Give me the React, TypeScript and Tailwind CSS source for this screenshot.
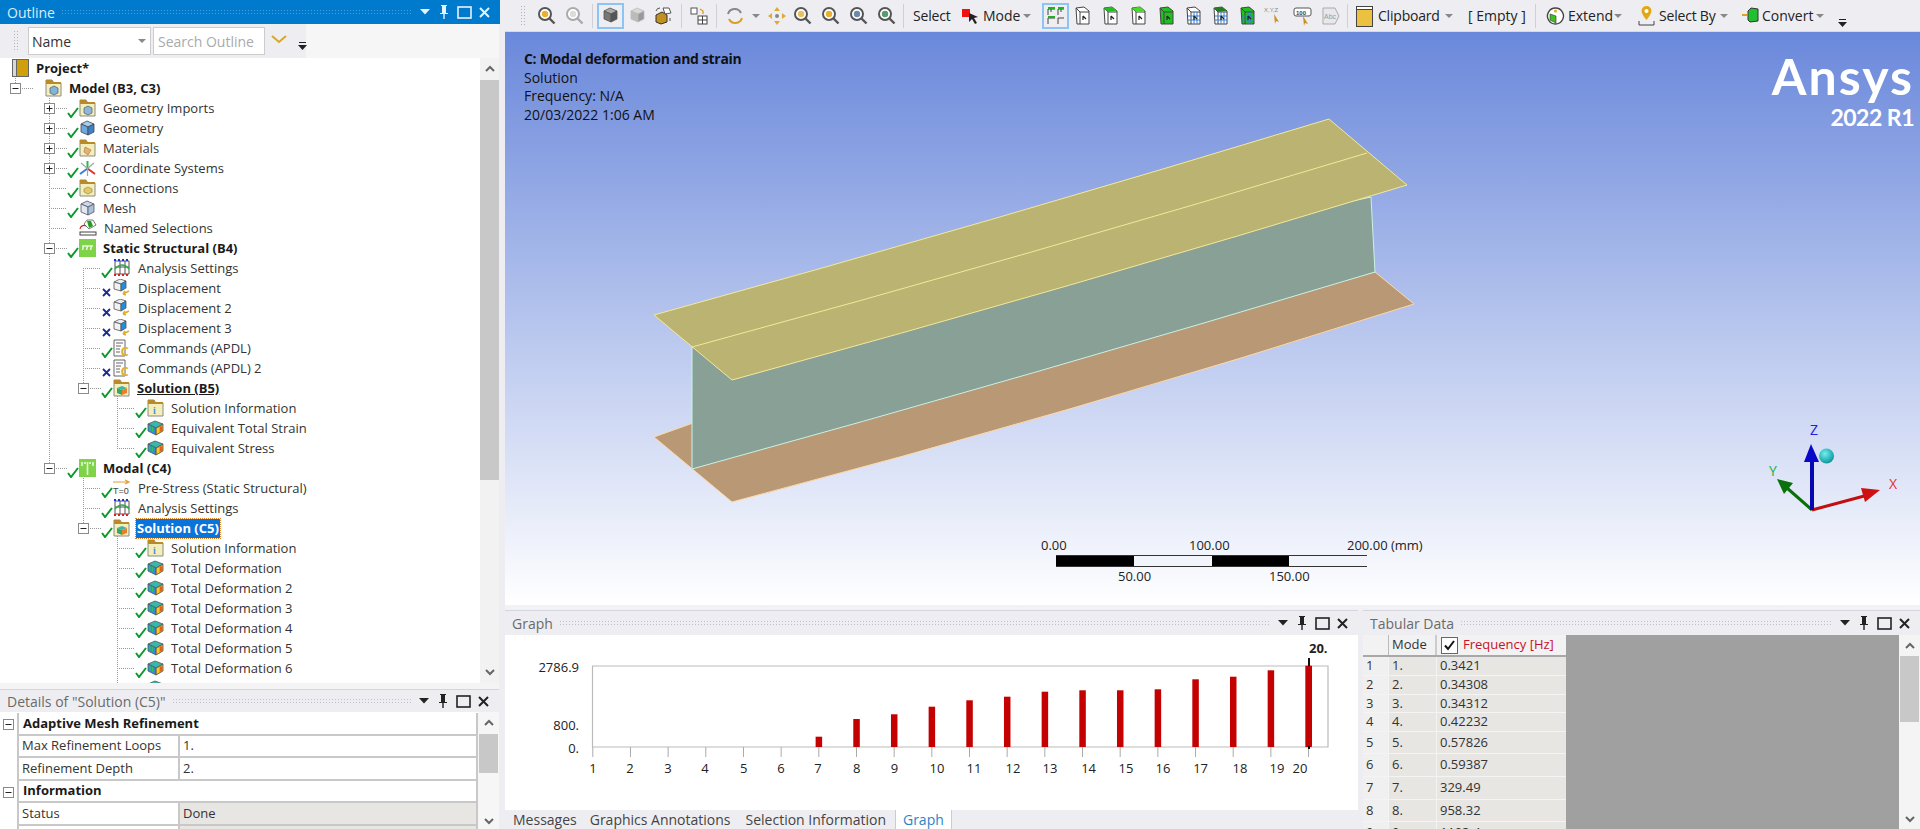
import React from "react";

// small svg helpers for the tree and toolbars
const Folder = ({ children }: { children?: React.ReactNode }) => (
  <svg width="17" height="18" viewBox="0 0 17 18" className="shrink-0">
    <path d="M1 1h6l2 3h7v13H1z" fill="#f4eebb" stroke="#8c8c80" />
    <path d="M1 1h6l1 2H16v2H1z" fill="#b98a2a" />
    {children}
  </svg>
);

const Cube = ({ top, left, right, stroke = "#555" }: { top: string; left: string; right: string; stroke?: string }) => (
  <svg width="17" height="17" viewBox="0 0 17 17" className="shrink-0">
    <polygon points="8,1 15,4 9,7 2,4" fill={top} stroke={stroke} strokeWidth="0.8" />
    <polygon points="2,4 9,7 9,15 2,12" fill={left} stroke={stroke} strokeWidth="0.8" />
    <polygon points="15,4 9,7 9,15 15,12" fill={right} stroke={stroke} strokeWidth="0.8" />
  </svg>
);

const Rainbow = () => (
  <svg width="17" height="17" viewBox="0 0 17 17" className="shrink-0">
    <polygon points="8,1 16,4 9,8 1,4" fill="#36b7b0" stroke="#555" strokeWidth="0.8" />
    <polygon points="1,4 9,8 9,15 1,11" fill="#2f8fd8" stroke="#555" strokeWidth="0.8" />
    <polygon points="16,4 9,8 9,15 16,11" fill="#f0a020" stroke="#555" strokeWidth="0.8" />
    <path d="M3 5.5v5M5.5 6.8v5" stroke="#35c060" strokeWidth="1.2" />
    <path d="M11 8v5" stroke="#f0e030" strokeWidth="1.4" />
    <path d="M14 6.5v5" stroke="#e04020" strokeWidth="1.4" />
  </svg>
);

const Disp = () => (
  <svg width="18" height="18" viewBox="0 0 18 18" className="shrink-0">
    <polygon points="7,0 13,2 8,5 1,3" fill="#e8eef4" stroke="#555" strokeWidth="0.8" />
    <polygon points="1,3 8,5 8,12 1,10" fill="#f2f2f2" stroke="#555" strokeWidth="0.8" />
    <polygon points="13,2 8,5 8,12 13,9" fill="#1d8fe0" stroke="#555" strokeWidth="0.8" />
    <path d="M16 12l-6 3M10 15l2-3M10 15l3 1" stroke="#e0ac30" strokeWidth="1.6" fill="none" />
  </svg>
);

const Analysis = () => (
  <svg width="18" height="19" viewBox="0 0 18 19" className="shrink-0">
    <path d="M2 2h14v13H2zM7 2v13M12 2v13M2 8h14" fill="none" stroke="#555" />
    <path d="M1 1h16" stroke="#2030e0" strokeWidth="2" strokeDasharray="2 2" />
    <path d="M1 16h16" stroke="#e02020" strokeWidth="2" strokeDasharray="2 2" />
    <path d="M2 10q7-8 14 0" fill="none" stroke="#20b040" strokeWidth="1.4" />
  </svg>
);

const Commands = () => (
  <svg width="18" height="18" viewBox="0 0 18 18" className="shrink-0">
    <path d="M1 1h11v16H1z" fill="#fff" stroke="#666" />
    <path d="M3 4h7M3 7h5M3 10h4M3 13h4" stroke="#666" />
    <text x="7.5" y="16.5" fontSize="13" fontWeight="700" fill="#e0b030" fontFamily="Open Sans, sans-serif">C</text>
  </svg>
);

const GreenBox = ({ modal }: { modal?: boolean }) => (
  <svg width="17" height="18" viewBox="0 0 17 18" className="shrink-0">
    <rect width="17" height="18" fill="#7ed348" />
    {modal ? (
      <path d="M8.5 16V3M3 3v4M14 3v4M6 3v2M11 3v2" stroke="#e8f8d8" strokeWidth="1.6" />
    ) : (
      <path d="M3 7h11M4.5 7l-1 4M8.5 7l-1 4M12.5 7l-1 4" stroke="#e8f8d8" strokeWidth="1.5" />
    )}
  </svg>
);

const iconMap: Record<string, React.ReactNode> = {
  project: (
    <svg width="17" height="18" viewBox="0 0 17 18" className="shrink-0">
      <rect x="0.5" y="0.5" width="16" height="17" fill="#d0a00c" stroke="#666" />
      <rect x="0.5" y="0.5" width="4" height="17" fill="#d8d8d8" stroke="#666" />
    </svg>
  ),
  model: <Folder><polygon points="5,9 9,7 13,9 13,14 9,16 5,14" fill="#7fb4dc" stroke="#556" strokeWidth="0.7" /></Folder>,
  imports: <Folder><polygon points="5,9 9,7 13,9 13,14 9,16 5,14" fill="#8cb8d8" stroke="#556" strokeWidth="0.7" /></Folder>,
  geometry: <Cube top="#a8cdea" left="#6fa8dc" right="#3d82c4" stroke="#445" />,
  materials: <Folder><path d="M6 8l6 3-3 5-4-3z" fill="#eab070" stroke="#a07040" strokeWidth="0.6" /></Folder>,
  coord: (
    <svg width="17" height="17" viewBox="0 0 17 17" className="shrink-0">
      <path d="M8.5 8.5V1" stroke="#20c040" strokeWidth="2" />
      <path d="M8.5 8.5L16 14" stroke="#e03030" strokeWidth="2" />
      <path d="M8.5 8.5L1 14" stroke="#3080e0" strokeWidth="2" />
      <path d="M8.5 8.5L15 3M8.5 8.5L2 3M8.5 8.5V16" stroke="#9aa" strokeWidth="1.2" />
    </svg>
  ),
  connections: <Folder><polygon points="5,10 9,8 13,10 13,13 9,15 5,13" fill="#e8c860" stroke="#887" strokeWidth="0.7" /></Folder>,
  mesh: <Cube top="#c8d8e8" left="#dfe8f0" right="#a8c0d8" stroke="#556" />,
  named: (
    <svg width="18" height="18" viewBox="0 0 18 18" className="shrink-0">
      <polygon points="8,1 14,1 17,6 10,10 5,5" fill="#fff" stroke="#555" strokeWidth="0.8" />
      <polygon points="8,2 12,2 14,7 10,9" fill="#20a020" />
      <path d="M1 10a4 4 0 0 1 6-3" fill="none" stroke="#e02020" strokeWidth="1.2" />
      <rect x="1" y="13" width="16" height="3" fill="#fff" stroke="#444" />
    </svg>
  ),
  static: <GreenBox />,
  analysis: <Analysis />,
  disp: <Disp />,
  commands: <Commands />,
  solution: (
    <Folder>
      <polygon points="4,9 9,7 14,9 9,11" fill="#36b7b0" />
      <polygon points="4,9 9,11 9,16 4,14" fill="#35a860" />
      <polygon points="14,9 9,11 9,16 14,14" fill="#e8802a" />
    </Folder>
  ),
  info: <Folder><text x="6" y="15" fontSize="10" fontWeight="700" fill="#4a90e0" fontFamily="Liberation Serif, serif">i</text></Folder>,
  rainbow: <Rainbow />,
  modal: <GreenBox modal />,
  prestress: (
    <svg width="18" height="18" viewBox="0 0 18 18" className="shrink-0">
      <path d="M0 3h16M12 1l4 2-4 2" fill="none" stroke="#e0a030" strokeWidth="1.2" />
      <text x="0" y="15" fontSize="9" fill="#444" fontFamily="Liberation Sans, sans-serif">T=0</text>
    </svg>
  ),
};

type Row = {
  label?: string;
  level: number;
  box?: "+" | "-";
  state?: "ok" | "x";
  icon: string;
  bold?: boolean;
  underline?: boolean;
  selected?: boolean;
};

const rows: Row[] = [
  { label: "Project*", level: 0, icon: "project", bold: true },
  { label: "Model (B3, C3)", level: 1, box: "-", icon: "model", bold: true },
  { label: "Geometry Imports", level: 2, box: "+", state: "ok", icon: "imports" },
  { label: "Geometry", level: 2, box: "+", state: "ok", icon: "geometry" },
  { label: "Materials", level: 2, box: "+", state: "ok", icon: "materials" },
  { label: "Coordinate Systems", level: 2, box: "+", state: "ok", icon: "coord" },
  { label: "Connections", level: 2, state: "ok", icon: "connections" },
  { label: "Mesh", level: 2, state: "ok", icon: "mesh" },
  { label: "Named Selections", level: 2, icon: "named" },
  { label: "Static Structural (B4)", level: 2, box: "-", state: "ok", icon: "static", bold: true },
  { label: "Analysis Settings", level: 3, state: "ok", icon: "analysis" },
  { label: "Displacement", level: 3, state: "x", icon: "disp" },
  { label: "Displacement 2", level: 3, state: "x", icon: "disp" },
  { label: "Displacement 3", level: 3, state: "x", icon: "disp" },
  { label: "Commands (APDL)", level: 3, state: "ok", icon: "commands" },
  { label: "Commands (APDL) 2", level: 3, state: "x", icon: "commands" },
  { label: "Solution (B5)", level: 3, box: "-", state: "ok", icon: "solution", bold: true, underline: true },
  { label: "Solution Information", level: 4, state: "ok", icon: "info" },
  { label: "Equivalent Total Strain", level: 4, state: "ok", icon: "rainbow" },
  { label: "Equivalent Stress", level: 4, state: "ok", icon: "rainbow" },
  { label: "Modal (C4)", level: 2, box: "-", state: "ok", icon: "modal", bold: true },
  { label: "Pre-Stress (Static Structural)", level: 3, state: "ok", icon: "prestress" },
  { label: "Analysis Settings", level: 3, state: "ok", icon: "analysis" },
  { label: "Solution (C5)", level: 3, box: "-", state: "ok", icon: "solution", bold: true, selected: true },
  { label: "Solution Information", level: 4, state: "ok", icon: "info" },
  { label: "Total Deformation", level: 4, state: "ok", icon: "rainbow" },
  { label: "Total Deformation 2", level: 4, state: "ok", icon: "rainbow" },
  { label: "Total Deformation 3", level: 4, state: "ok", icon: "rainbow" },
  { label: "Total Deformation 4", level: 4, state: "ok", icon: "rainbow" },
  { label: "Total Deformation 5", level: 4, state: "ok", icon: "rainbow" },
  { label: "Total Deformation 6", level: 4, state: "ok", icon: "rainbow" },
  { level: 4, icon: "rainbow" },
];

const rowPad = ["pl-[12px]", "pl-[10px]", "pl-[44px]", "pl-[78px]", "pl-[112px]"];

const ExpandBox = ({ kind }: { kind: "+" | "-" }) => (
  <svg width="11" height="11" viewBox="0 0 11 11" className="shrink-0">
    <rect x="0.5" y="0.5" width="10" height="10" fill="#fff" stroke="#8a8a8a" />
    <path d={kind === "+" ? "M2.5 5.5h6M5.5 2.5v6" : "M2.5 5.5h6"} stroke="#222" />
  </svg>
);

const StateMark = ({ state }: { state: "ok" | "x" }) => (
  <svg width="12" height="12" viewBox="0 0 12 12" className="shrink-0 translate-y-[4px]">
    {state === "ok" ? (
      <path d="M1 7l3 4 7-9" fill="none" stroke="#0a9a2a" strokeWidth="2" />
    ) : (
      <path d="M2 3l7 7M9 3l-7 7" fill="none" stroke="#1a2a90" strokeWidth="1.8" />
    )}
  </svg>
);

const TreeRow = ({ row }: { row: Row }) => (
  <div className={`relative flex h-5 shrink-0 items-center ${rowPad[row.level]}`}>
    {row.level > 0 && (
      <div className="mr-[12px] flex w-[11px] shrink-0 justify-center">{row.box && <ExpandBox kind={row.box} />}</div>
    )}
    {row.level > 0 && <div className="flex w-[12px] shrink-0">{row.state && <StateMark state={row.state} />}</div>}
    {iconMap[row.icon]}
    {row.label && (
      <span
        className={`ml-[6px] px-px text-[13px] leading-[19px] whitespace-nowrap ${
          row.selected
            ? "bg-[#0a74da] font-bold text-white outline-1 outline-dotted outline-[#e08020]"
            : row.bold
              ? "font-bold text-[#1a1a1a]"
              : "text-[#333]"
        } ${row.underline ? "underline" : ""}`}
      >
        {row.label}
      </span>
    )}
  </div>
);

// dotted guide lines behind the tree rows
const TreeGuides = () => {
  const guideX = [0, 15, 49, 83, 117];
  return (
    <svg className="absolute top-0 left-0" width="480" height="625">
      <g stroke="#9a9a9a" strokeDasharray="1 1" fill="none">
        <path d="M15.5 20V30" />
        <path d="M49.5 40V410" />
        <path d="M83.5 210V330" />
        <path d="M83.5 420V470" />
        <path d="M117.5 338V390" />
        <path d="M117.5 478V625" />
        {rows.map((r, i) =>
          r.level > 0 && r.label ? (
            <path key={i} d={`M${guideX[r.level] + (r.box ? 5 : 0)} ${10.5 + i * 20}h${r.box ? 13 : 18}`} />
          ) : null
        )}
      </g>
    </svg>
  );
};

const PanelControls = ({ color }: { color: string }) => (
  <div className="flex shrink-0 items-center" style={{ color }}>
    <svg width="12" height="8" viewBox="0 0 12 8" className="mr-[6px]"><path d="M1 1h10L6 6.5z" fill="currentColor" /></svg>
    <svg width="14" height="16" viewBox="0 0 14 16" className="mr-[6px]">
      <path d="M4 1h6v1H9v7h2v1H7.7v5H6.3v-5H3V9h2V2H4z" fill="currentColor" />
    </svg>
    <svg width="15" height="14" viewBox="0 0 15 14" className="mr-[6px]"><rect x="1" y="2" width="13" height="11" fill="none" stroke="currentColor" strokeWidth="1.6" /></svg>
    <svg width="13" height="13" viewBox="0 0 13 13"><path d="M2 2l9 9M11 2l-9 9" stroke="currentColor" strokeWidth="2" /></svg>
  </div>
);

const PanelTitle = ({ title, active, tall }: { title: string; active?: boolean; tall?: boolean }) => (
  <div
    className={`flex shrink-0 items-center pr-[9px] pl-[7px] text-[14px] ${
      active
        ? "h-6 bg-[#007acc] text-[#dcecf8]"
        : `border-t border-[#d4d4de] bg-[#eeeef2] text-[#6a6a6a] ${tall ? "h-[25px]" : "h-[23px]"}`
    }`}
  >
    <span className="mr-[6px] whitespace-nowrap">{title}</span>
    <div
      className={`mr-[6px] h-[7px] flex-1 bg-[length:3px_3px] ${
        active
          ? "bg-[radial-gradient(#4aa0dc_1px,transparent_1px)]"
          : "bg-[radial-gradient(#c0c0c8_1px,transparent_1px)]"
      }`}
    />
    <PanelControls color={active ? "#e8f2fa" : "#222"} />
  </div>
);

const Grip = () => <div className="h-[22px] w-[6px] shrink-0 bg-[radial-gradient(#b4b4b4_1px,transparent_1px)] bg-[length:3px_3px]" />;

const Caret = ({ color = "#888" }: { color?: string }) => (
  <svg width="8" height="6" viewBox="0 0 8 6" className="shrink-0"><path d="M0 1h8L4 5z" fill={color} /></svg>
);

const Overflow = () => (
  <svg width="9" height="8" viewBox="0 0 9 8" className="shrink-0"><path d="M1 0h7v1H1zM0 3h9L4.5 8z" fill="#222" /></svg>
);

const ScrollArrow = ({ up }: { up?: boolean }) => (
  <svg width="12" height="8" viewBox="0 0 12 8"><path d={up ? "M2 6l4-4 4 4" : "M2 2l4 4 4-4"} fill="none" stroke="#666" strokeWidth="2" /></svg>
);

const Zoom = ({ c, light }: { c: string; light?: boolean }) => (
  <svg width="20" height="20" viewBox="0 0 20 20">
    <circle cx="8" cy="8" r="6" fill="#fff" stroke={light ? "#aaa" : "#555"} strokeWidth="2" />
    <path d="M12.5 12.5l5 5" stroke={light ? "#aaa" : "#555"} strokeWidth="2.4" />
    <circle cx="8" cy="8" r="3.2" fill={c} />
  </svg>
);

const FaceBox = ({ fill, all, grid }: { fill?: string; all?: boolean; grid?: boolean }) => (
  <svg width="18" height="20" viewBox="0 0 18 20">
    <polygon points="2,2 10,1 15,5 15,18 3,18" fill={all ? "#20c020" : "#fff"} stroke="#444" />
    <path d="M2 2l4 4h9M6 6v12" fill="none" stroke="#444" />
    {fill && <polygon points="2,2 10,1 15,5 6,6" fill={fill} />}
    {grid && <path d="M3 10h12M3 14h12M9 6v12M12 6v12" stroke="#3080e0" />}
    <path d="M9 10l3 3M9 10v4" stroke="#222" strokeWidth="1.2" />
  </svg>
);

const Btn = ({ children, selected, w = "w-7" }: { children: React.ReactNode; selected?: boolean; w?: string }) => (
  <div
    className={`flex h-[26px] shrink-0 items-center justify-center ${w} ${selected ? "border-2 border-[#8cc4f4]" : ""}`}
  >
    {children}
  </div>
);

const Sep = ({ m }: { m: string }) => <div className={`h-[24px] w-px shrink-0 bg-[#cfcfd4] ${m}`} />;

const Toolbar = () => (
  <div className="flex h-8 shrink-0 items-center border-b border-[#d8d8de] bg-[#eeeef2] pl-[15px] text-[14px] text-[#222]">
    <Grip />
    <div className="w-[7px] shrink-0" />
    <Btn><Zoom c="#e8b030" /></Btn>
    <Btn><Zoom c="#dcdcdc" light /></Btn>
    <Sep m="mr-[4px] ml-[3px]" />
    <Btn selected w="w-[27px]"><Cube top="#aaa" left="#777" right="#555" /></Btn>
    <Btn w="w-[26px]"><Cube top="#d8d8d8" left="#bbb" right="#999" stroke="#bbb" /></Btn>
    <Btn w="w-[26px]">
      <svg width="20" height="20" viewBox="0 0 20 20">
        <polygon points="3,9 9,6 14,9 14,16 8,18 3,16" fill="#c09020" stroke="#333" />
        <polygon points="10,2 16,2 18,7 12,8" fill="#fff" stroke="#555" />
        <path d="M3 5a4 4 0 0 1 4-3M17 12v3" stroke="#555" fill="none" />
      </svg>
    </Btn>
    <Sep m="mr-[4px] ml-[5px]" />
    <Btn w="w-[26px]">
      <svg width="20" height="20" viewBox="0 0 20 20">
        <rect x="2" y="2" width="6" height="6" fill="#fff" stroke="#555" />
        <rect x="9" y="10" width="9" height="8" fill="#fff" stroke="#444" />
        <path d="M13.5 10v8M9 14h9" stroke="#444" />
        <path d="M11 3l3 2v3" stroke="#e0a020" fill="none" strokeWidth="1.4" />
      </svg>
    </Btn>
    <Sep m="mr-[4px] ml-[4px]" />
    <Btn w="w-[28px]">
      <svg width="20" height="20" viewBox="0 0 20 20">
        <path d="M3 8a7 7 0 0 1 13-1" fill="none" stroke="#888" strokeWidth="2" />
        <path d="M17 12a7 7 0 0 1-13 1" fill="none" stroke="#d8a020" strokeWidth="2" />
      </svg>
    </Btn>
    <div className="ml-[3px] mr-[5px]"><Caret /></div>
    <Btn w="w-[24px]">
      <svg width="20" height="20" viewBox="0 0 20 20">
        <path d="M10 1l3 4H7zM10 19l3-4H7zM1 10l4-3v6zM19 10l-4-3v6z" fill="#e0ac30" />
        <circle cx="10" cy="10" r="2" fill="#888" />
      </svg>
    </Btn>
    <Btn><Zoom c="#e8c060" /></Btn>
    <Btn><Zoom c="#e8b030" /></Btn>
    <Btn><Zoom c="#6a8aaa" /></Btn>
    <Btn><Zoom c="#5a9a70" /></Btn>
    <Sep m="mr-[9px] ml-[2px]" />
    <span className="w-[38px] shrink-0 tracking-[-0.2px]">Select</span>
    <div className="ml-[11px] w-[21px] shrink-0">
      <svg width="18" height="18" viewBox="0 0 18 18">
        <rect x="0" y="2" width="8" height="8" fill="#f01010" />
        <path d="M7 6l9 4-4 1 3 5-2 1-3-5-3 3z" fill="#222" />
      </svg>
    </div>
    <span className="w-[38px] shrink-0">Mode</span>
    <div className="ml-[2px] mr-[11px]"><Caret /></div>
    <Btn selected w="w-[27px]">
      <svg width="18" height="20" viewBox="0 0 18 20">
        <path d="M1 3h7M1 3v6M4 3v3M11 3h6M11 3v6M14 3v3M1 12h7M1 12v6M11 12h6M11 12v6" stroke="#444" fill="none" />
        <path d="M1 2h7M11 2h6M1 11h7" stroke="#20b020" strokeWidth="2" />
      </svg>
    </Btn>
    <Btn><FaceBox /></Btn>
    <Btn><FaceBox fill="#20c020" /></Btn>
    <Btn><FaceBox fill="#40e020" /></Btn>
    <Btn w="w-[27px]"><FaceBox all /></Btn>
    <Btn w="w-[27px]"><FaceBox grid /></Btn>
    <Btn w="w-[27px]"><FaceBox grid fill="#208020" /></Btn>
    <Btn w="w-[27px]"><FaceBox grid all /></Btn>
    <Btn>
      <svg width="22" height="20" viewBox="0 0 22 20">
        <text x="0" y="6" fontSize="6" fill="#888" fontFamily="Liberation Sans, sans-serif">X,Y,Z</text>
        <path d="M10 8l5 8-3-1-1 3z" fill="#c89020" />
      </svg>
    </Btn>
    <Btn>
      <svg width="20" height="20" viewBox="0 0 20 20">
        <rect x="1" y="2" width="17" height="8" rx="2" fill="#fff" stroke="#555" />
        <text x="3" y="8.5" fontSize="6" fontWeight="700" fill="#444" fontFamily="Liberation Sans, sans-serif">100</text>
        <path d="M10 10l5 8-3-1-1 3z" fill="#c89020" />
      </svg>
    </Btn>
    <Btn w="w-[27px]">
      <svg width="20" height="20" viewBox="0 0 20 20">
        <path d="M2 2h12l4 8-4 8H2z" fill="#e8e8ec" stroke="#aaa" />
        <text x="3" y="12.5" fontSize="7" fill="#999" fontFamily="Liberation Sans, sans-serif">Abc</text>
      </svg>
    </Btn>
    <Sep m="mr-[8px] ml-[3px]" />
    <div className="mr-[5px] shrink-0">
      <svg width="17" height="22" viewBox="0 0 17 22">
        <rect x="0.5" y="1.5" width="16" height="20" fill="#ecc040" stroke="#444" />
        <rect x="0.5" y="1.5" width="16" height="3" fill="#fff" stroke="#444" />
      </svg>
    </div>
    <span className="w-[64px] shrink-0 tracking-[-0.2px]">Clipboard</span>
    <div className="mr-[15px] ml-[3px]"><Caret /></div>
    <span className="w-[60px] shrink-0 whitespace-nowrap">[ Empty ]</span>
    <Sep m="mr-[10px] ml-[7px]" />
    <div className="mr-[3px] shrink-0">
      <svg width="19" height="20" viewBox="0 0 19 20">
        <path d="M9.5 2a8 8 0 1 1-.1 0z" fill="#fff" stroke="#444" strokeWidth="1.4" />
        <polygon points="4,8 10,10 10,17 4,14" fill="#40c020" stroke="#333" strokeWidth="0.6" />
        <circle cx="9.5" cy="5" r="1.6" fill="#e0b030" />
      </svg>
    </div>
    <span className="w-[44px] shrink-0">Extend</span>
    <div className="mr-[16px] ml-[2px]"><Caret /></div>
    <div className="mr-[4px] shrink-0">
      <svg width="17" height="22" viewBox="0 0 17 22">
        <path d="M8.5 1a5 5 0 0 1 5 5c0 3-5 9-5 9s-5-6-5-9a5 5 0 0 1 5-5z" fill="#e0a818" />
        <circle cx="8.5" cy="6" r="2" fill="#fff" />
        <path d="M1 16v4h15v-4" fill="none" stroke="#444" />
      </svg>
    </div>
    <span className="w-[59px] shrink-0 tracking-[-0.2px]">Select By</span>
    <div className="mr-[14px] ml-[2px]"><Caret /></div>
    <div className="mr-[2px] shrink-0">
      <svg width="18" height="18" viewBox="0 0 18 18">
        <polygon points="6,4 9,1 16,2 16,14 8,15 6,13" fill="#20c030" stroke="#333" />
        <path d="M0 8h5" stroke="#e0a020" strokeWidth="2" />
      </svg>
    </div>
    <span className="w-[52px] shrink-0">Convert</span>
    <div className="ml-[2px] mr-[14px]"><Caret /></div>
    <div className="mt-[14px]"><Overflow /></div>
  </div>
);

// beam edges sag a little, so use shallow quadratic curves
const Beam = () => (
  <svg className="absolute top-0 left-0" width="1415" height="573" viewBox="505 32 1415 573">
    <path d="M654 437 L693 423 L1375 272 L1414 304 Q1073 413 732 502 Z" fill="#b89875" stroke="#ffd8a8" strokeWidth="1" />
    <path d="M692 347 L1371 197 L1375 272 Q1033 375 692 469 Z" fill="#89a097" stroke="#c8f2e4" strokeWidth="1" />
    <path d="M654 315 Q991 222 1329 119 L1407 185 Q1069 288 732 380 Z" fill="#bab372" stroke="#f4e898" strokeWidth="1" />
    <path d="M692 347 Q1030 255 1367 153" fill="none" stroke="#f4e898" strokeWidth="1" />
  </svg>
);

const Triad = () => (
  <svg className="absolute top-[368px] right-0" width="180" height="130" viewBox="0 0 180 130">
    <path d="M72 110L128 95" stroke="#c01010" strokeWidth="3" />
    <polygon points="140,90 121,88 125,102" fill="#d01010" />
    <path d="M72 110L47 88" stroke="#0a700a" strokeWidth="3" />
    <polygon points="37,79 53,83 44,94" fill="#0a700a" />
    <path d="M72 110V60" stroke="#0808b0" strokeWidth="4" />
    <polygon points="71,44 64,62 79,62" fill="#0808c8" />
    <defs>
      <radialGradient id="ball" cx="0.4" cy="0.35" r="0.7">
        <stop offset="0" stopColor="#70f0f0" />
        <stop offset="1" stopColor="#089098" />
      </radialGradient>
    </defs>
    <circle cx="86.5" cy="56" r="7.5" fill="url(#ball)" />
    <text x="70" y="35" fontSize="14" fill="#2020e0" fontFamily="Open Sans, sans-serif">Z</text>
    <text x="29" y="76" fontSize="14" fill="#20b040" fontFamily="Open Sans, sans-serif">Y</text>
    <text x="149" y="89" fontSize="14" fill="#e03030" fontFamily="Open Sans, sans-serif">X</text>
  </svg>
);

const ScaleBar = () => (
  <div className="absolute top-[505px] left-[551px] text-[13px] text-[#222]">
    <div className="-ml-[15px] flex h-[18px] w-[400px] items-center">
      <span className="w-[148px] shrink-0">0.00</span>
      <span className="w-[158px] shrink-0">100.00</span>
      <span className="whitespace-nowrap">200.00 (mm)</span>
    </div>
    <div className="flex h-[12px] w-[311px] border-y border-[#333]">
      <div className="flex-1 bg-black" />
      <div className="flex-1 bg-[#f2f4fb]" />
      <div className="flex-1 bg-black" />
      <div className="flex-1 bg-[#f2f4fb]" />
    </div>
    <div className="flex h-[20px] items-center pl-[62px]">
      <span className="w-[151px] shrink-0">50.00</span>
      <span>150.00</span>
    </div>
  </div>
);

const Viewport = () => (
  <div className="relative h-[573px] shrink-0 overflow-hidden bg-[linear-gradient(180deg,#6a88db_0%,#c4d0f1_60%,#ffffff_100%)]">
    <Beam />
    <div className="absolute top-[18px] left-[19px] text-[14px] leading-[18.7px] text-[#111]">
      <div className="font-bold tracking-[-0.3px]">C: Modal deformation and strain</div>
      <div>Solution</div>
      <div>Frequency: N/A</div>
      <div>20/03/2022 1:06 AM</div>
    </div>
    <div className="absolute top-[18px] right-[6px] flex flex-col items-end text-white">
      <div className="font-['Lato'] text-[50px] leading-[52px] font-bold tracking-[2px]">Ansys</div>
      <div className="mt-[2px] font-['Lato'] text-[23px] leading-[26px] font-bold tracking-[-0.5px]">2022 R1</div>
    </div>
    <Triad />
    <ScaleBar />
  </div>
);

const barTops = [0, 0, 0, 0, 0, 0, 736.7, 719, 714.3, 706.7, 700.3, 696.7, 691.7, 690.3, 690.3, 689.3, 679.3, 676.7, 670.3, 665.7];
const xLabels = [593, 630, 668, 705, 743.6, 781, 818, 856.6, 894.5, 937, 974, 1013, 1050, 1088.6, 1126, 1163, 1200.6, 1240, 1277, 1300];

const Chart = () => (
  <svg className="block" width="853" height="175" viewBox="505 635 853 175">
    <g fontFamily="Open Sans, sans-serif" fontSize="13" fill="#222">
      <path d="M592.5 666H1328V747H592.5Z" fill="none" stroke="#bbb" strokeWidth="1.2" />
      {barTops.map((t, i) => {
        const x = 592.8 + i * 37.67;
        return (
          <g key={i}>
            <path d={`M${x} 747v10`} stroke="#aaa" />
            {t > 0 && <rect x={x - 3.2} y={t} width="6.5" height={747 - t} fill="#c40000" />}
            <text x={xLabels[i]} y="773" textAnchor="middle">{i + 1}</text>
          </g>
        );
      })}
      <path d="M1309 658V749" stroke="#111" strokeWidth="2" />
      <path d="M1309 666V746" stroke="#c40000" strokeWidth="6" />
      <text x="1309" y="653" fontWeight="700">20.</text>
      <text x="579" y="672" textAnchor="end">2786.9</text>
      <text x="579" y="730" textAnchor="end">800.</text>
      <text x="579" y="753" textAnchor="end">0.</text>
    </g>
  </svg>
);

const GraphPanel = () => (
  <div className="flex w-[853px] shrink-0 flex-col">
    <PanelTitle title="Graph" tall />
    <div className="h-[175px] shrink-0 overflow-hidden bg-white">
      <Chart />
    </div>
    <div className="flex h-[19px] items-center overflow-hidden pl-[8px] text-[14px] text-[#444]">
      <span className="mr-[13px] whitespace-nowrap">Messages</span>
      <span className="mr-[15px] whitespace-nowrap">Graphics Annotations</span>
      <span className="mr-[9px] whitespace-nowrap">Selection Information</span>
      <span className="flex h-full items-center border-x border-[#ccc] bg-white px-[7px] text-[#2a84c8]">Graph</span>
    </div>
  </div>
);

const freq = [
  { h: "h-[19px]", v: "0.3421" },
  { h: "h-[19px]", v: "0.34308" },
  { h: "h-[18px]", v: "0.34312" },
  { h: "h-[19px]", v: "0.42232" },
  { h: "h-[22px]", v: "0.57826" },
  { h: "h-[23px]", v: "0.59387" },
  { h: "h-[23px]", v: "329.49" },
  { h: "h-[22px]", v: "958.32" },
  { h: "h-[22px]", v: "1103.4" },
];

const Tabular = () => (
  <div className="flex min-w-0 flex-1 flex-col">
    <PanelTitle title="Tabular Data" tall />
    <div className="flex min-h-0 flex-1 overflow-hidden">
      <div className="flex w-[203px] shrink-0 flex-col overflow-hidden text-[13px] text-[#333]">
        <div className="flex h-[22px] shrink-0 border-b-2 border-[#a8a8a8] bg-[#f2f2f2]">
          <div className="w-[26px] shrink-0 border-r border-[#bbb]" />
          <div className="flex w-[48px] shrink-0 items-center border-r-2 border-[#ccc] pl-[3px]">Mode</div>
          <div className="flex flex-1 items-center whitespace-nowrap pl-[4px] text-[#c4122a]">
            <svg width="17" height="17" viewBox="0 0 17 17" className="mr-[5px] shrink-0">
              <rect x="0.5" y="0.5" width="16" height="16" fill="#fff" stroke="#666" />
              <path d="M4 8.5l3 3.5 6-8" fill="none" stroke="#111" strokeWidth="2" />
            </svg>
            Frequency [Hz]
          </div>
        </div>
        {freq.map((r, i) => (
          <div key={i} className={`flex shrink-0 border-b border-[#f4f4f4] bg-[#e8e6e2] ${r.h}`}>
            <div className="flex w-[26px] shrink-0 items-center border-r border-[#f4f4f4] bg-[#f0f0f0] pl-[3px]">{i + 1}</div>
            <div className="flex w-[48px] shrink-0 items-center border-r border-[#f4f4f4] pl-[3px]">{i + 1}.</div>
            <div className="flex flex-1 items-center pl-[3px]">{r.v}</div>
          </div>
        ))}
      </div>
      <div className="min-w-0 flex-1 bg-[#a0a0a0]" />
      <div className="flex w-[21px] shrink-0 flex-col items-center bg-[#f4f4f4]">
        <div className="flex h-[21px] shrink-0 items-center"><ScrollArrow up /></div>
        <div className="h-[66px] w-[19px] shrink-0 bg-[#c8c8c8]" />
        <div className="flex-1" />
        <div className="flex h-[21px] shrink-0 items-center"><ScrollArrow /></div>
      </div>
    </div>
  </div>
);

const detailRows = [
  { kind: "cat", label: "Adaptive Mesh Refinement", h: "h-[23px]" },
  { kind: "row", label: "Max Refinement Loops", value: "1.", h: "h-[22px]" },
  { kind: "row", label: "Refinement Depth", value: "2.", h: "h-[23px]" },
  { kind: "cat", label: "Information", h: "h-[22px]" },
  { kind: "row", label: "Status", value: "Done", h: "h-[23px]", shaded: true },
  { kind: "row", label: "", value: "", h: "h-[6px]", shaded: true },
];

const Details = () => (
  <div className="flex min-h-0 flex-1 flex-col overflow-hidden bg-white">
    <PanelTitle title={'Details of "Solution (C5)"'} />
    <div className="flex min-h-0 flex-1 overflow-hidden">
      <div className="flex min-w-0 flex-1 flex-col pt-px text-[13px] text-[#333]">
        {detailRows.map((r, i) =>
          r.kind === "cat" ? (
            <div key={i} className={`flex shrink-0 items-center ${r.h}`}>
              <div className="flex w-[17px] shrink-0 justify-center pr-[1px]"><ExpandBox kind="-" /></div>
              <div className="flex h-full flex-1 items-center border-x-2 border-b-2 border-[#c8c8c8] pl-[4px] font-bold text-[#1a1a1a]">
                {r.label}
              </div>
            </div>
          ) : (
            <div key={i} className={`ml-[17px] flex shrink-0 border-x-2 border-b-2 border-[#c8c8c8] ${r.h}`}>
              <div className="flex w-[161px] shrink-0 items-center border-r-2 border-[#c8c8c8] pl-[3px]">{r.label}</div>
              <div className={`flex flex-1 items-center pl-[3px] ${r.shaded ? "bg-[#e8e6e2]" : ""}`}>{r.value}</div>
            </div>
          )
        )}
      </div>
      <div className="flex w-[21px] shrink-0 flex-col items-center bg-[#f6f6f6]">
        <div className="flex h-[22px] shrink-0 items-center"><ScrollArrow up /></div>
        <div className="h-[39px] w-[19px] shrink-0 bg-[#c8c8c8]" />
        <div className="flex-1" />
        <div className="flex h-[16px] shrink-0 items-center"><ScrollArrow /></div>
      </div>
    </div>
  </div>
);

const OutlineToolbar = () => (
  <div className="flex h-[34px] shrink-0 items-center bg-[#f6f6f6]">
    <div className="flex h-full w-[306px] shrink-0 items-center bg-[#eeeef2] pl-[13px] text-[14px]">
      <Grip />
      <div className="ml-[9px] flex h-[28px] w-[123px] shrink-0 items-center justify-between border border-[#ccc] bg-white pr-[4px] pl-[3px] text-[#333]">
        Name
        <Caret />
      </div>
      <div className="ml-[2px] flex h-[28px] w-[112px] shrink-0 items-center border border-[#ccc] bg-white pl-[4px] whitespace-nowrap text-[#aaa]">
        Search Outline
      </div>
      <svg width="16" height="10" viewBox="0 0 16 10" className="ml-[6px] shrink-0 -translate-y-[1px]">
        <path d="M1 1l7 6 7-6" fill="none" stroke="#d8a820" strokeWidth="2" />
      </svg>
      <div className="mt-[10px] ml-[11px]"><Overflow /></div>
    </div>
  </div>
);

const Tree = () => (
  <div className="flex h-[625px] shrink-0">
    <div className="relative flex w-[480px] shrink-0 flex-col overflow-hidden bg-white font-['Open_Sans']">
      <TreeGuides />
      {rows.map((r, i) => (
        <TreeRow key={i} row={r} />
      ))}
    </div>
    <div className="flex w-[19px] shrink-0 flex-col items-center bg-[#f2f2f2]">
      <div className="flex h-[22px] shrink-0 items-center"><ScrollArrow up /></div>
      <div className="h-[400px] w-[19px] shrink-0 bg-[#c8c8c8]" />
      <div className="flex-1" />
      <div className="flex h-[22px] shrink-0 items-center"><ScrollArrow /></div>
    </div>
  </div>
);

export default function App() {
  return (
    <div className="flex h-[829px] w-[1920px] overflow-hidden bg-[#eeeef2] font-['Open_Sans',sans-serif]">
      <div className="flex w-[505px] shrink-0 flex-col">
        <div className="w-[500px]"><PanelTitle title="Outline" active /></div>
        <div className="w-[499px]"><OutlineToolbar /></div>
        <Tree />
        <div className="h-[6px] w-[499px] shrink-0 bg-[#f4f4f4]" />
        <div className="flex min-h-0 w-[499px] flex-1"><Details /></div>
      </div>
      <div className="flex min-w-0 flex-1 flex-col">
        <Toolbar />
        <Viewport />
        <div className="h-[5px] shrink-0 bg-[#f2f2f4]" />
        <div className="flex min-h-0 flex-1 gap-[5px]">
          <GraphPanel />
          <Tabular />
        </div>
      </div>
    </div>
  );
}
